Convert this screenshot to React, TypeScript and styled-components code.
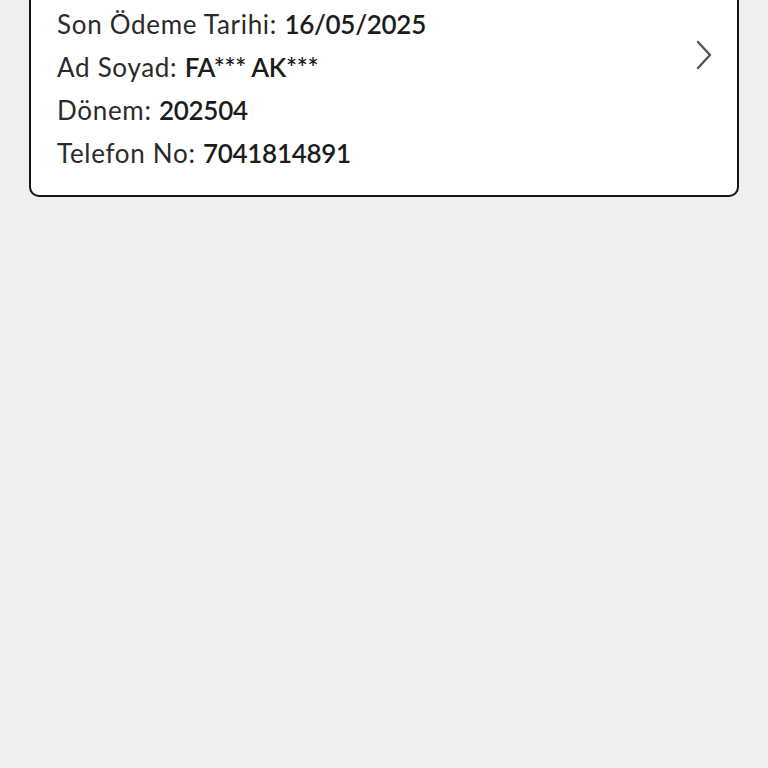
import React from "react";
import styled, { createGlobalStyle } from "styled-components";

const Global = createGlobalStyle`
  html, body { margin: 0; padding: 0; background: #efefef; }
  body { font-family: Lato, "Open Sans", sans-serif; overflow: hidden; }
`;

const Page = styled.div`
  width: 768px;
  height: 768px;
  background: #efefef;
  padding: 0 29px;
  box-sizing: border-box;
`;

const Card = styled.div`
  margin-top: -40px;
  background: #fff;
  border: 2px solid #141414;
  border-radius: 10px;
  padding: 40.5px 24px 20.5px 26px;
  display: flex;
  justify-content: space-between;
  align-items: flex-start;
`;

const Lines = styled.div`
  display: flex;
  flex-direction: column;
`;

const Line = styled.div`
  font-size: 26px;
  line-height: 43px;
  letter-spacing: 0.7px;
  color: #2a2a2a;
  white-space: nowrap;
`;

const Value = styled.span`
  font-weight: 600;
  letter-spacing: -0.3px;
  color: #1c1c1c;
`;

const Chevron = styled.svg`
  margin-top: 37px;
  width: 18px;
  height: 30px;
  flex-shrink: 0;
`;

const rows: [string, string][] = [
  ["Son Ödeme Tarihi:", "16/05/2025"],
  ["Ad Soyad:", "FA*** AK***"],
  ["Dönem:", "202504"],
  ["Telefon No:", "7041814891"],
];

export default function App() {
  return (
    <>
      <Global />
      <Page>
        <Card>
          <Lines>
            {rows.map(([k, v]) => (
              <Line key={k}>
                {k} <Value>{v}</Value>
              </Line>
            ))}
          </Lines>
          <Chevron viewBox="0 0 18 30">
            <polyline points="3,2 15,15 3,28" fill="none" stroke="#555" strokeWidth="2.4" strokeLinecap="round" strokeLinejoin="round" />
          </Chevron>
        </Card>
      </Page>
    </>
  );
}
